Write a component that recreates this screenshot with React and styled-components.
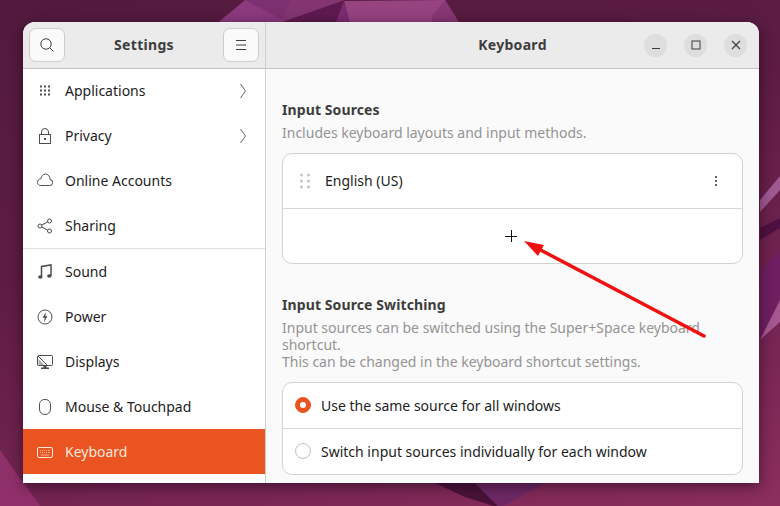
import React from 'react';
import styled, { createGlobalStyle } from 'styled-components';

const GlobalStyle = createGlobalStyle`
  html, body {
    margin: 0;
    padding: 0;
    background: #5a1a42;
  }
  * {
    box-sizing: border-box;
  }
`;

const Desktop = styled.div`
  position: relative;
  width: 780px;
  height: 506px;
  overflow: hidden;
  padding: 22px 21px 23px 23px;
  font-family: "Noto Sans", "Open Sans", sans-serif;
  background: linear-gradient(165deg, #521a3e 0%, #5e1c44 40%, #7a2655 80%, #8c2f5c 100%);
`;

const Backdrop = styled.svg`
  position: absolute;
  top: 0;
  left: 0;
`;

const Annotation = styled.svg`
  position: absolute;
  top: 0;
  left: 0;
  pointer-events: none;
`;

const Window = styled.div`
  position: relative;
  display: flex;
  height: 461px;
  overflow: hidden;
  border-radius: 12px 12px 0 0;
  box-shadow: 0 3px 14px rgba(20, 0, 20, 0.55);
`;

const Sidebar = styled.aside`
  width: 243px;
  flex: none;
  background: #ffffff;
  border-right: 1px solid #cfcfcf;
`;

const Main = styled.main`
  flex: 1;
  min-width: 0;
  background: #fafafa;
`;

const HeaderBar = styled.header`
  display: flex;
  align-items: center;
  height: 47px;
  padding: 0 6px;
  background: #ebebeb;
  border-bottom: 1px solid #c2c2c2;
`;

const MainHeader = styled(HeaderBar)`
  display: grid;
  grid-template-columns: 1fr auto 1fr;
  padding: 0 12px;
`;

const Title = styled.div`
  flex: 1;
  padding-bottom: 2px;
  text-align: center;
  font-size: 14px;
  font-weight: 700;
  letter-spacing: 0.3px;
  color: #3d3d3d;
`;

const MainTitle = styled(Title)`
  grid-column: 2;
`;

const HeaderButton = styled.div`
  display: flex;
  align-items: center;
  justify-content: center;
  width: 36px;
  height: 34px;
  background: #fafafa;
  border: 1px solid #cdcdcd;
  border-radius: 7px;
  color: #3d3d3d;
`;

const WindowControls = styled.div`
  grid-column: 3;
  display: flex;
  justify-content: flex-end;
  gap: 17px;
`;

const WindowButton = styled.div`
  display: flex;
  align-items: center;
  justify-content: center;
  width: 23px;
  height: 23px;
  border-radius: 50%;
  background: #dedede;
  color: #3d3d3d;
`;

const NavList = styled.nav`
  margin-top: -1px;
`;

const NavItem = styled.div`
  display: flex;
  align-items: center;
  gap: 12px;
  height: 45px;
  padding: 0 18px 0 14px;
  font-size: 14px;
  color: ${(p) => (p.$active ? '#fbe6dc' : '#1d1d1d')};
  background: ${(p) => (p.$active ? '#e95420' : 'transparent')};
`;

const NavIcon = styled.svg`
  flex: none;
  color: ${(p) => (p.$active ? '#fbe6dc' : '#4d4d4d')};
`;

const NavLabel = styled.span`
  flex: 1;
`;

const NavDivider = styled.div`
  height: 1px;
  background: #e0e0e0;
`;

const Content = styled.div`
  padding: 31px 16px 0;
`;

const SectionTitle = styled.h2`
  margin: 0;
  font-size: 14px;
  line-height: 20px;
  font-weight: 700;
  letter-spacing: 0.1px;
  color: #3d3d3d;
`;

const SectionText = styled.p`
  margin: 4px 0 12px;
  font-size: 14px;
  line-height: 17px;
  color: #949494;
`;

const Card = styled.div`
  background: #ffffff;
  border: 1px solid #d2d2d2;
  border-radius: 10px;
  margin-bottom: 31px;
`;

const SourceRow = styled.div`
  display: flex;
  align-items: center;
  height: 55px;
  padding: 0 24px 1px 17px;
  font-size: 14px;
  color: #1d1d1d;
  border-bottom: 1px solid #d8d8d8;
`;

const SourceName = styled.span`
  flex: 1;
  margin-left: 15px;
`;

const AddRow = styled.div`
  display: flex;
  align-items: center;
  justify-content: center;
  height: 54px;
  padding-right: 3px;
  color: #111111;
`;

const RadioRow = styled.div`
  display: flex;
  align-items: center;
  gap: 10px;
  height: ${(p) => (p.$first ? '45px' : '46px')};
  padding: 0 12px 1px;
  font-size: 14px;
  color: #1d1d1d;
  border-top: ${(p) => (p.$first ? 'none' : '1px solid #d8d8d8')};
`;

const Radio = styled.span`
  display: flex;
  align-items: center;
  justify-content: center;
  width: 16px;
  height: 16px;
  flex: none;
  border-radius: 50%;
  background: ${(p) => (p.$checked ? '#e95420' : '#ffffff')};
  border: 1px solid ${(p) => (p.$checked ? '#e95420' : '#c2c2c2')};

  &::after {
    content: '';
    width: 6px;
    height: 6px;
    border-radius: 50%;
    background: ${(p) => (p.$checked ? '#ffffff' : 'transparent')};
  }
`;

const icons = {
  apps: (
    <g fill="currentColor">
      {[2.5, 6.5, 10.5].flatMap((y) =>
        [3, 7, 11].map((x) => <rect key={`${x}-${y}`} x={x} y={y} width="2" height="2" />)
      )}
    </g>
  ),
  lock: (
    <g fill="none" stroke="currentColor">
      <rect x="2.500" y="6.500" width="11" height="9" />
      <path d="M4.500 6.500V4a3.500 3.500 0 0 1 7 0v2.500" />
      <rect x="7" y="10" width="2" height="2" fill="currentColor" stroke="none" />
    </g>
  ),
  cloud: (
    <path
      d="M3.500 12.500h9a3 3 0 0 0 .5-6A5 5 0 0 0 8.500 1C6 1 4.500 3 4 5.500 1.800 6 .5 7.500.5 9.300.5 11.200 1.800 12.500 3.500 12.500z"
      fill="none"
      stroke="currentColor"
    />
  ),
  share: (
    <g fill="none" stroke="currentColor">
      <circle cx="3" cy="8" r="2" />
      <circle cx="12.500" cy="3" r="2" />
      <circle cx="12.500" cy="13" r="2" />
      <path d="M4.800 7l5.900-3.100M4.800 9l5.900 3.100" />
    </g>
  ),
  sound: (
    <g>
      <path d="M4.500 13V2.500L14 1v11" fill="none" stroke="currentColor" strokeWidth="1.500" />
      <ellipse cx="3.300" cy="13" rx="2.200" ry="1.700" fill="currentColor" />
      <ellipse cx="12.300" cy="12" rx="2.200" ry="1.700" fill="currentColor" />
    </g>
  ),
  power: (
    <g>
      <circle cx="8" cy="8" r="7" fill="none" stroke="currentColor" />
      <path d="M9 3L5.500 8.800h2.200L7 13l3.500-5.800H8.300z" fill="currentColor" />
    </g>
  ),
  display: (
    <g>
      <rect x="0.500" y="1.500" width="15" height="10" rx="1" fill="none" stroke="currentColor" />
      <path d="M1 2l9 9" stroke="currentColor" fill="none" />
      <path d="M1.500 5l6 6h-6z" fill="currentColor" opacity="0.45" />
      <path d="M6.500 12h3v1.500H12V15H4v-1.500h2.500z" fill="currentColor" />
    </g>
  ),
  mouse: (
    <path
      d="M8 .5C11 .5 13.500 2 13.500 6v4c0 3.500-2.500 5.500-5.500 5.500S2.500 13.500 2.500 10V6C2.500 2 5 .5 8 .5z"
      fill="none"
      stroke="currentColor"
    />
  ),
  keyboard: (
    <g>
      <rect x="0.500" y="3.500" width="15" height="10" rx="1.500" fill="none" stroke="currentColor" />
      <path
        d="M3 6.500h1M5 6.500h1M7 6.500h1M9 6.500h1M11 6.500h2M3 8.500h1M5 8.500h1M7 8.500h1M9 8.500h1M11 8.500h2M4 11h8"
        stroke="currentColor"
        strokeWidth="0.800"
        opacity="0.8"
      />
    </g>
  ),
};

const Chevron = () => (
  <svg width="8" height="16" viewBox="0 0 8 16">
    <path d="M1.500 1l5 7-5 7" fill="none" stroke="#666666" strokeWidth="1" />
  </svg>
);

const navGroups = [
  [
    { id: 'apps', label: 'Applications', more: true },
    { id: 'lock', label: 'Privacy', more: true },
    { id: 'cloud', label: 'Online Accounts' },
    { id: 'share', label: 'Sharing' },
  ],
  [
    { id: 'sound', label: 'Sound' },
    { id: 'power', label: 'Power' },
    { id: 'display', label: 'Displays' },
    { id: 'mouse', label: 'Mouse & Touchpad' },
    { id: 'keyboard', label: 'Keyboard', active: true },
  ],
];

const App = () => (
  <>
    <GlobalStyle />
    <Desktop>
      <Backdrop width="780" height="506" viewBox="0 0 780 506">
        <polygon points="215,25 245,0 290,0 285,22 272,32 225,32" fill="#8b3a7e" />
        <polygon points="245,0 290,0 283,20" fill="#7d3070" />
        <polygon points="290,0 345,0 283,22" fill="#833571" />
        <polygon points="276,32 283,22 344,1 332,32" fill="#5e1a50" />
        <polygon points="344,1 445,0 465,32 352,32" fill="#96437f" />
        <polygon points="344,1 352,32 332,32" fill="#7c2c6e" />
        <polygon points="445,0 432,16 432,32 465,32" fill="#873774" />
        <polygon points="0,450 40,506 0,506" fill="#90306a" />
        <polygon points="435,483 475,483 500,508 465,497" fill="#4a1238" />
        <polygon points="475,483 545,483 500,508" fill="#6d2864" />
        <polygon points="760,212 780,190 780,176 760,200" fill="#a05a92" />
        <polygon points="760,240 780,228 780,218 760,228" fill="#4e1040" />
        <polygon points="760,270 780,250 780,300 760,340" fill="#6e1f60" />
        <polygon points="760,340 780,300 780,322 762,338" fill="#a5588f" />
      </Backdrop>
      <Window>
        <Sidebar>
          <HeaderBar>
            <HeaderButton>
              <svg width="14" height="14" viewBox="0 0 14 14">
                <circle cx="6" cy="6" r="5.200" fill="none" stroke="currentColor" />
                <path d="M9.800 9.800l3.700 3.700" stroke="currentColor" />
              </svg>
            </HeaderButton>
            <Title>Settings</Title>
            <HeaderButton>
              <svg width="12" height="10" viewBox="0 0 12 10">
                <path d="M1 .5h10M1 5h10M1 9.500h10" stroke="currentColor" />
              </svg>
            </HeaderButton>
          </HeaderBar>
          <NavList>
            {navGroups.map((group, i) => (
              <React.Fragment key={group[0].id}>
                {i > 0 && <NavDivider />}
                {group.map((item) => (
                  <NavItem key={item.id} $active={item.active}>
                    <NavIcon $active={item.active} width="16" height="16" viewBox="0 0 16 16">
                      {icons[item.id]}
                    </NavIcon>
                    <NavLabel>{item.label}</NavLabel>
                    {item.more && <Chevron />}
                  </NavItem>
                ))}
              </React.Fragment>
            ))}
          </NavList>
        </Sidebar>
        <Main>
          <MainHeader>
            <MainTitle>Keyboard</MainTitle>
            <WindowControls>
              <WindowButton>
                <svg width="10" height="10" viewBox="0 0 10 10">
                  <path d="M1 8.500h8" stroke="currentColor" />
                </svg>
              </WindowButton>
              <WindowButton>
                <svg width="10" height="10" viewBox="0 0 10 10">
                  <rect x="1" y="1" width="8" height="8" fill="none" stroke="currentColor" />
                </svg>
              </WindowButton>
              <WindowButton>
                <svg width="10" height="10" viewBox="0 0 10 10">
                  <path d="M1 1l8 8M9 1l-8 8" stroke="currentColor" strokeWidth="1.200" />
                </svg>
              </WindowButton>
            </WindowControls>
          </MainHeader>
          <Content>
            <SectionTitle>Input Sources</SectionTitle>
            <SectionText>Includes keyboard layouts and input methods.</SectionText>
            <Card>
              <SourceRow>
                <svg width="10" height="16" viewBox="0 0 10 16">
                  <g fill="#c4c4c4">
                    {[2, 8, 14].flatMap((y) =>
                      [1.500, 8.500].map((x) => <circle key={`${x}-${y}`} cx={x} cy={y} r="1.500" />)
                    )}
                  </g>
                </svg>
                <SourceName>English (US)</SourceName>
                <svg width="4" height="12" viewBox="0 0 4 12">
                  <g fill="#3d3d3d">
                    <circle cx="2" cy="2" r="1.100" />
                    <circle cx="2" cy="6" r="1.100" />
                    <circle cx="2" cy="10" r="1.100" />
                  </g>
                </svg>
              </SourceRow>
              <AddRow>
                <svg width="12" height="12" viewBox="0 0 12 12">
                  <path d="M0 6.500h12M6.500 0v12" stroke="currentColor" />
                </svg>
              </AddRow>
            </Card>
            <SectionTitle>Input Source Switching</SectionTitle>
            <SectionText>
              Input sources can be switched using the Super+Space keyboard
              <br />
              shortcut.
              <br />
              This can be changed in the keyboard shortcut settings.
            </SectionText>
            <Card>
              <RadioRow $first>
                <Radio $checked />
                Use the same source for all windows
              </RadioRow>
              <RadioRow>
                <Radio />
                Switch input sources individually for each window
              </RadioRow>
            </Card>
          </Content>
        </Main>
      </Window>
      <Annotation width="780" height="506" viewBox="0 0 780 506">
        <path d="M704 336L533 246" stroke="#f01010" strokeWidth="3.500" strokeLinecap="round" />
        <polygon points="524,241 544,245 538,256" fill="#f01010" />
      </Annotation>
    </Desktop>
  </>
);

export default App;
